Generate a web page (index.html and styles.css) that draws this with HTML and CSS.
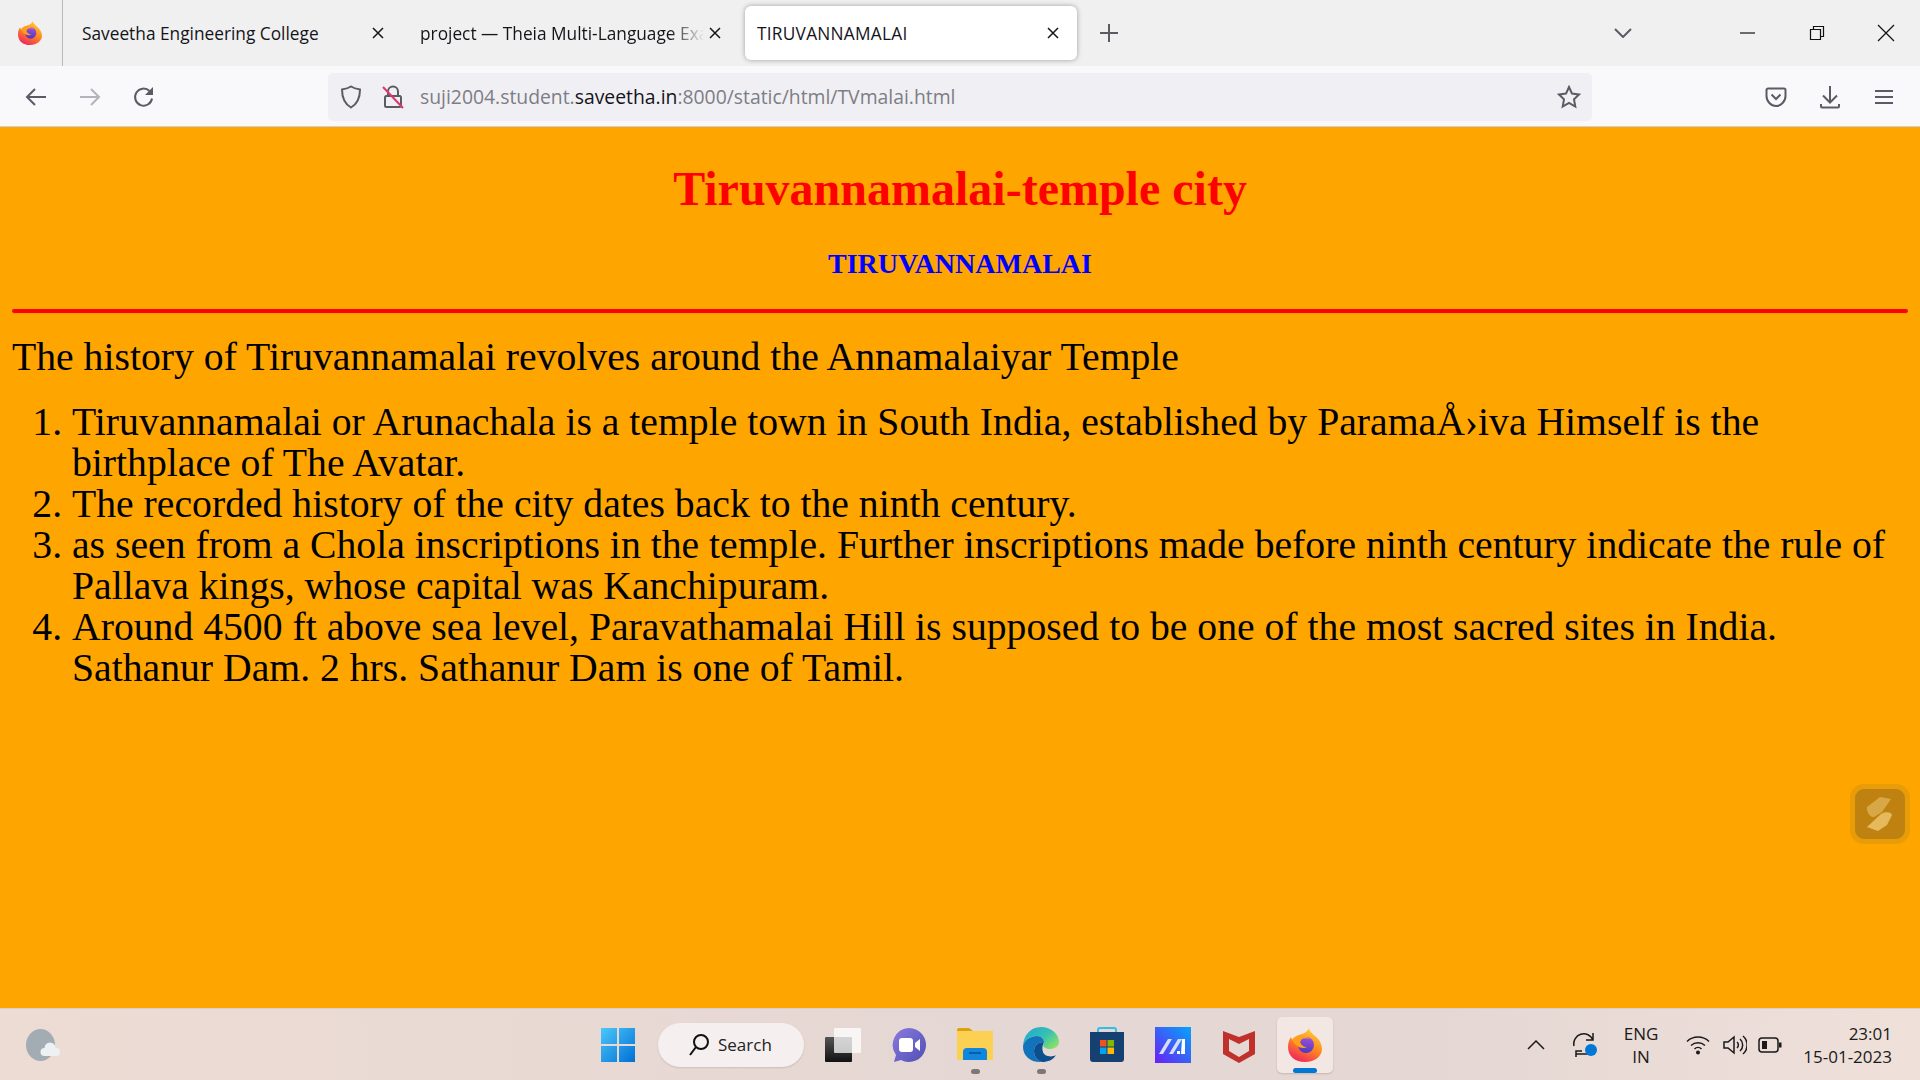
FILE: index.html
```html
<!DOCTYPE html>
<html lang="en">
<head>
    <meta charset="UTF-8">
    <title>TIRUVANNAMALAI</title>
    <link rel="stylesheet" href="styles.css">
</head>
<body>
    <svg class="defs" width="0" height="0" aria-hidden="true">
        <defs>
            <linearGradient id="foxOuter" x1="0.8" y1="0" x2="0.3" y2="1">
                <stop offset="0" stop-color="#ffd53a"/>
                <stop offset="0.5" stop-color="#ff8a1f"/>
                <stop offset="1" stop-color="#f0255e"/>
            </linearGradient>
            <linearGradient id="foxInner" x1="0.6" y1="0" x2="0.4" y2="1">
                <stop offset="0" stop-color="#a24fe0"/>
                <stop offset="1" stop-color="#4a3ab8"/>
            </linearGradient>
            <symbol id="firefox" viewBox="0 0 34 34">
                <path d="M21 0c0 3 3 5 6 8 4 3 7 8 7 13 0 7-7 13-17 13S0 28 0 19c0-4 1-7 3-10l1 3c2-2 4-4 7-5 3-1 8-2 10-7z" fill="url(#foxOuter)"/>
                <circle cx="18" cy="17" r="8" fill="url(#foxInner)"/>
                <path d="M4 12c2-3 4-4 8-5-1 1-1 2 0 2 3-1 8 0 10 2-3-1-6-1-8 0-1 1-1 2-2 3 1 3 4 5 7 5-3 2-8 1-11-2-2-2-3-3-4-5z" fill="#ff9f1c"/>
            </symbol>
        </defs>
    </svg>

    <div class="tabbar">
        <div class="tab-logo">
            <svg width="24" height="24"><use href="#firefox"/></svg>
        </div>
        <div class="tab tab-first">
            <span class="tab-title">Saveetha Engineering College</span>
            <svg class="tab-close" width="12" height="12" viewBox="0 0 12 12"><path d="M1 1l10 10M11 1L1 11"/></svg>
        </div>
        <div class="tab tab-second">
            <span class="tab-title tab-fade">project — Theia Multi-Language Exa</span>
            <svg class="tab-close" width="12" height="12" viewBox="0 0 12 12"><path d="M1 1l10 10M11 1L1 11"/></svg>
        </div>
        <div class="tab tab-active">
            <span class="tab-title">TIRUVANNAMALAI</span>
            <svg class="tab-close" width="12" height="12" viewBox="0 0 12 12"><path d="M1 1l10 10M11 1L1 11"/></svg>
        </div>
        <svg class="tab-new" width="18" height="18" viewBox="0 0 18 18"><path d="M9 0v18M0 9h18"/></svg>
        <div class="tabbar-right">
            <svg class="tab-list" width="18" height="10" viewBox="0 0 18 10"><path d="M1 1l8 8 8-8"/></svg>
            <svg class="win-btn win-min" width="16" height="16" viewBox="0 0 16 16"><path d="M0 8h15"/></svg>
            <svg class="win-btn win-restore" width="16" height="16" viewBox="0 0 16 16"><path d="M1.500 4.500h10v10h-10zM4.500 4.500v-3h10v10h-3"/></svg>
            <svg class="win-btn win-close" width="18" height="18" viewBox="0 0 18 18"><path d="M1 1l16 16M17 1L1 17"/></svg>
        </div>
    </div>

    <div class="navbar">
        <svg class="nav-icon nav-back" width="22" height="20" viewBox="0 0 22 20"><path d="M21 10H2M10 2l-8 8 8 8"/></svg>
        <svg class="nav-icon nav-forward" width="22" height="20" viewBox="0 0 22 20"><path d="M1 10h19M12 2l8 8-8 8"/></svg>
        <svg class="nav-icon nav-reload" width="22" height="22" viewBox="0 0 22 22"><path d="M19 12.500A8.500 8.500 0 1 1 16.500 5"/><path class="solid" d="M20 1v8h-8z"/></svg>
        <div class="urlbar">
            <svg class="url-shield" width="22" height="24" viewBox="0 0 22 24"><path d="M11 1.500c3 2 6 2.500 9 3 0 8-2 14-9 18-7-4-9-10-9-18 3-.5 6-1 9-3z"/></svg>
            <svg class="url-lock" width="22" height="24" viewBox="0 0 22 24"><path d="M6 11V6.500a5 5 0 0 1 10 0V11M4 11h14a1.500 1.500 0 0 1 1 1.500v8a1.500 1.500 0 0 1-1.500 1.500h-13A1.500 1.500 0 0 1 3 20.500v-8A1.500 1.500 0 0 1 4 11z"/><path class="slash" d="M1 2l20 21"/></svg>
            <span class="url-text">suji2004.student.<b>saveetha.in</b>:8000/static/html/TVmalai.html</span>
            <svg class="url-star" width="24" height="24" viewBox="0 0 24 24"><path d="M12 2l3 6.600 7 .9-5 4.900 1.300 7.100L12 18l-6.300 3.500L7 14.400 2 9.500l7-.9z"/></svg>
        </div>
        <svg class="nav-icon nav-pocket" width="22" height="22" viewBox="0 0 22 22"><path d="M3 2.500h16a1.500 1.500 0 0 1 1.500 1.500v6c0 5.500-4.500 10-9.500 10S1.500 15.500 1.500 10V4A1.500 1.500 0 0 1 3 2.500z"/><path d="M6.500 8.500l4.500 4.500 4.500-4.500"/></svg>
        <svg class="nav-icon nav-download" width="22" height="24" viewBox="0 0 22 24"><path d="M11 1v16M4 10.500l7 7 7-7M2 19v2.500a1 1 0 0 0 1 1h16a1 1 0 0 0 1-1V19"/></svg>
        <svg class="nav-icon nav-menu" width="20" height="18" viewBox="0 0 20 18"><path d="M1 3h18M1 9h18M1 15h18"/></svg>
    </div>

    <main class="page">
        <h1>Tiruvannamalai-temple city</h1>
        <h2>TIRUVANNAMALAI</h2>
        <hr>
        <p>The history of Tiruvannamalai revolves around the Annamalaiyar Temple</p>
        <ol>
            <li>Tiruvannamalai or Arunachala is a temple town in South India, established by ParamaÅ›iva Himself is the birthplace of The Avatar.</li>
            <li>The recorded history of the city dates back to the ninth century.</li>
            <li>as seen from a Chola inscriptions in the temple. Further inscriptions made before ninth century indicate the rule of Pallava kings, whose capital was Kanchipuram.</li>
            <li>Around 4500 ft above sea level, Paravathamalai Hill is supposed to be one of the most sacred sites in India. Sathanur Dam. 2 hrs. Sathanur Dam is one of Tamil.</li>
        </ol>
        <div class="float-widget">
            <svg width="30" height="38" viewBox="0 0 30 38">
                <path d="M2 12L15 2l11 2-9 13-8 5c-4 1-8-6-7-10z" fill="#d9a846"/>
                <path d="M2 32l14-13c4-3 11-2 11 1l-5 10-9 6z" fill="#e6ba5c"/>
            </svg>
        </div>
    </main>

    <footer class="taskbar">
        <div class="weather">
            <svg width="42" height="34" viewBox="0 0 42 34">
                <ellipse cx="14.500" cy="17" rx="14.500" ry="16" fill="#a3abb3"/>
                <g fill="#eef1f4">
                    <circle cx="24" cy="20" r="5.500"/>
                    <circle cx="18.500" cy="24" r="4"/>
                    <circle cx="30" cy="24" r="4"/>
                    <rect x="18.500" y="22" width="11.500" height="6"/>
                </g>
            </svg>
        </div>
        <div class="task-center">
            <div class="slot slot-start">
                <svg width="36" height="36" viewBox="0 0 36 36">
                    <defs>
                        <linearGradient id="winBlue" x1="0" y1="0" x2="1" y2="1">
                            <stop offset="0" stop-color="#4cc7fb"/>
                            <stop offset="1" stop-color="#0070d4"/>
                        </linearGradient>
                    </defs>
                    <path d="M1 1h16v16H1zM19 1h16v16H19zM1 19h16v16H1zM19 19h16v16H19z" fill="url(#winBlue)"/>
                </svg>
            </div>
            <div class="search-pill">
                <svg width="22" height="24" viewBox="0 0 22 24"><circle cx="13" cy="9" r="7"/><path d="M8 14l-6 8"/></svg>
                <span>Search</span>
            </div>
            <div class="slot slot-view">
                <svg width="38" height="36" viewBox="0 0 38 36">
                    <defs>
                        <linearGradient id="viewDark" x1="0" y1="0" x2="0" y2="1">
                            <stop offset="0" stop-color="#555"/>
                            <stop offset="1" stop-color="#111"/>
                        </linearGradient>
                    </defs>
                    <rect x="1" y="10" width="27" height="25" rx="1" fill="url(#viewDark)"/>
                    <rect x="10" y="1" width="27" height="25" rx="1" fill="#fff" fill-opacity="0.75"/>
                </svg>
            </div>
            <div class="slot">
                <svg width="36" height="36" viewBox="0 0 36 36">
                    <defs>
                        <linearGradient id="meetBg" x1="0" y1="0" x2="1" y2="1">
                            <stop offset="0" stop-color="#8a7bdc"/>
                            <stop offset="1" stop-color="#4f4fb6"/>
                        </linearGradient>
                    </defs>
                    <path d="M18 1a17 17 0 1 1-8 32l-7 2 2-7A17 17 0 0 1 18 1z" fill="url(#meetBg)"/>
                    <rect x="8" y="11" width="14" height="14" rx="3" fill="#fff"/>
                    <path d="M24 16l5-4v12l-5-4z" fill="#fff"/>
                </svg>
            </div>
            <div class="slot has-dot">
                <svg width="36" height="34" viewBox="0 0 36 34">
                    <path d="M0 2a2 2 0 0 1 2-2h10l4 3h-16z" fill="#dea10e"/>
                    <path d="M0 3h36v29H0z" fill="#fcd052"/>
                    <path d="M6 32V24a4 4 0 0 1 4-4h16a4 4 0 0 1 4 4v8z" fill="#1086de"/>
                    <rect x="12" y="24" width="12" height="2" fill="#0b5ca8"/>
                </svg>
            </div>
            <div class="slot has-dot">
                <svg width="36" height="36" viewBox="0 0 36 36">
                    <defs>
                        <linearGradient id="edgeTop" x1="0" y1="0" x2="1" y2="0.700">
                            <stop offset="0" stop-color="#1fa7d8"/>
                            <stop offset="0.600" stop-color="#35c1b0"/>
                            <stop offset="1" stop-color="#86e06a"/>
                        </linearGradient>
                    </defs>
                    <path d="M18 0c10 0 18 7 18 15 0 4-4 7-9 7-4 0-7-2-7-4 0-1 1-1 1-3 0-3-3-6-7-6-7 0-14 5-14 11C0 9 7 0 18 0z" fill="url(#edgeTop)"/>
                    <path d="M0 20c0-6 7-11 14-11 4 0 7 3 7 6-5 0-10 3-10 9 0 5 3 9 8 11C8 36 0 29 0 20z" fill="#1173bb"/>
                    <path d="M21 15c-5 0-10 3-10 9 0 5 3 9 8 11 6 0 11-2 14-7-5 3-12 1-13-3-1-3-1-6 1-10z" fill="#0c4f8f"/>
                </svg>
            </div>
            <div class="slot">
                <svg width="36" height="36" viewBox="0 0 36 36">
                    <path d="M9 7V3a2 2 0 0 1 2-2h14a2 2 0 0 1 2 2v4" fill="none" stroke="#35bdea" stroke-width="2"/>
                    <path d="M1 5h34v27a3 3 0 0 1-3 3H4a3 3 0 0 1-3-3z" fill="#163f72"/>
                    <rect x="11" y="13" width="6.500" height="6.500" fill="#f25022"/>
                    <rect x="18.500" y="13" width="6.500" height="6.500" fill="#7fba00"/>
                    <rect x="11" y="20.500" width="6.500" height="6.500" fill="#00a4ef"/>
                    <rect x="18.500" y="20.500" width="6.500" height="6.500" fill="#ffb900"/>
                </svg>
            </div>
            <div class="slot">
                <svg width="36" height="36" viewBox="0 0 36 36">
                    <defs>
                        <linearGradient id="appBg" x1="0" y1="1" x2="1" y2="0">
                            <stop offset="0" stop-color="#6a20f5"/>
                            <stop offset="1" stop-color="#05a4fb"/>
                        </linearGradient>
                    </defs>
                    <rect width="36" height="36" fill="url(#appBg)"/>
                    <path d="M4 27l9-15h4l-9 15zM14 27l9-15h4l-9 15z" fill="#d5ddf7"/>
                    <path d="M27 12h3v15h-4zM22 24h3v3h-3z" fill="#fff"/>
                </svg>
            </div>
            <div class="slot">
                <svg width="32" height="36" viewBox="0 0 32 36"><path d="M0 4l16 6 16-6v23l-16 9-16-9zM6 12v12l10 6 10-6V12l-10 5z" fill="#c0312b" fill-rule="evenodd"/></svg>
            </div>
            <div class="slot slot-active">
                <svg width="34" height="34"><use href="#firefox"/></svg>
                <span class="active-bar"></span>
            </div>
        </div>
        <div class="task-tray">
            <svg class="tray-up" width="18" height="10" viewBox="0 0 18 10"><path d="M1 9l8-8 8 8"/></svg>
            <svg class="tray-sync" width="24" height="26" viewBox="0 0 24 26">
                <path d="M1 14A10 10 0 0 1 20 8M20 1v7h-7M20 22H3M3 25v-6h6" fill="none"/>
                <circle class="tray-dot" cx="18" cy="18" r="6"/>
            </svg>
            <div class="tray-lang">ENG<br>IN</div>
            <svg class="tray-wifi" width="24" height="20" viewBox="0 0 24 20"><path d="M1 6.500a16 16 0 0 1 22 0M5 10.500a10.500 10.500 0 0 1 14 0M8.500 14a5 5 0 0 1 7 0"/><circle class="solid" cx="12" cy="17.500" r="2"/></svg>
            <svg class="tray-vol" width="24" height="22" viewBox="0 0 24 22"><path d="M1 8h4l6-5v16l-6-5H1zM14 8a4 4 0 0 1 0 6M17 5a8 8 0 0 1 0 12M20 2a12 12 0 0 1 0 18"/></svg>
            <svg class="tray-batt" width="24" height="16" viewBox="0 0 24 16"><rect x="1" y="1" width="19" height="14" rx="3"/><rect class="solid" x="4" y="4" width="5" height="8"/><rect class="solid" x="21" y="5.500" width="2.500" height="5"/></svg>
            <div class="tray-clock">23:01<br>15-01-2023</div>
        </div>
    </footer>
</body>
</html>
```

FILE: styles.css
```css
* {
    margin: 0;
    padding: 0;
    box-sizing: border-box;
}

html, body {
    width: 100%;
    height: 100%;
    overflow: hidden;
}

body {
    display: flex;
    flex-direction: column;
    font-family: "Open Sans", "Noto Sans", sans-serif;
    background: orange;
}

.defs {
    position: absolute;
}

svg {
    flex: none;
    display: block;
}

/* tab strip */
.tabbar {
    height: 66px;
    display: flex;
    align-items: center;
    background: #f0f0f0;
    flex: none;
}

.tab-logo {
    width: 63px;
    height: 66px;
    display: flex;
    align-items: center;
    padding-left: 18px;
    border-right: 1px solid #b9b9b9;
}

.tab {
    height: 54px;
    display: flex;
    align-items: center;
    font-size: 17.300px;
    color: #15141a;
}

.tab-first {
    width: 334px;
    padding-left: 19px;
}

.tab-second {
    width: 348px;
    padding-left: 23px;
}

.tab-active {
    width: 332px;
    padding-left: 12px;
    letter-spacing: 0.25px;
    background: #fff;
    border-radius: 6px;
    box-shadow: 0 0 5px rgba(0, 0, 0, 0.35);
}

.tab-title {
    flex: 1;
    white-space: nowrap;
    overflow: hidden;
}

.tab-fade {
    -webkit-mask-image: linear-gradient(to right, #000 88%, transparent 100%);
    mask-image: linear-gradient(to right, #000 88%, transparent 100%);
}

.tab-close {
    margin: 0 18px 0 10px;
    fill: none;
    stroke: #15141a;
    stroke-width: 1.500;
}

.tab-first .tab-close {
    margin-right: 13px;
}

.tab-second .tab-close {
    margin: 0 24px 0 5px;
}

.tab-new {
    margin-left: 23px;
    fill: none;
    stroke: #5b5b66;
    stroke-width: 2;
}

.tabbar-right {
    flex: 1;
    display: flex;
    align-items: center;
    justify-content: flex-end;
    padding-right: 25px;
}

.tab-list {
    margin-right: 108px;
    fill: none;
    stroke: #5b5b66;
    stroke-width: 2;
}

.win-btn {
    fill: none;
    stroke: #111;
    stroke-width: 1.200;
}

.win-min {
    margin-right: 53px;
}

.win-restore {
    margin-right: 52px;
}

/* toolbar */
.navbar {
    height: 61px;
    flex: none;
    display: flex;
    align-items: center;
    padding-top: 1px;
    background: #f9f9fb;
    border-bottom: 1px solid #cfcfd8;
}

.nav-icon,
.urlbar svg {
    fill: none;
    stroke: #5b5b66;
    stroke-width: 2;
}

.nav-icon .solid {
    fill: #5b5b66;
    stroke: none;
}

.nav-back {
    margin-left: 25px;
}

.nav-forward {
    margin-left: 32px;
    stroke: #b4b4ba;
}

.nav-reload {
    margin-left: 32px;
}

.urlbar {
    width: 1264px;
    height: 48px;
    margin-left: 173px;
    display: flex;
    align-items: center;
    background: #f0f0f4;
    border-radius: 5px;
}

.url-shield {
    margin-left: 12px;
}

.url-lock {
    margin-left: 20px;
}

.url-lock .slash {
    stroke: #e0356a;
}

.url-text {
    flex: 1;
    margin-left: 16px;
    font-size: 19.350px;
    color: #7d7d85;
    white-space: nowrap;
}

.url-text b {
    font-weight: 400;
    color: #15141a;
}

.url-star {
    margin-right: 11px;
}

.nav-pocket {
    margin-left: 173px;
}

.nav-download {
    margin-left: 32px;
}

.nav-menu {
    margin-left: 33px;
}

/* page content */
.page {
    flex: 1;
    position: relative;
    padding: 0 12px;
    background: orange;
    font-family: "Liberation Serif", serif;
    font-size: 39.700px;
    line-height: 41px;
    color: #000;
}

h1 {
    margin-top: 34px;
    height: 56px;
    text-align: center;
    color: red;
    font-size: 48px;
    line-height: 56px;
    font-weight: bold;
}

h2 {
    margin-top: 31px;
    text-align: center;
    color: blue;
    font-size: 28px;
    line-height: 32px;
    font-weight: bold;
}

hr {
    height: 4px;
    margin-top: 29px;
    background: red;
    border: none;
    border-radius: 2px;
}

.page p {
    margin-top: 24px;
}

ol {
    margin-top: 24px;
    padding-left: 60px;
}

.float-widget {
    position: absolute;
    top: 657px;
    right: 10px;
    width: 60px;
    height: 60px;
    display: flex;
    align-items: center;
    justify-content: center;
    background: #bf8210;
    border: 5px solid #e89c08;
    border-radius: 14px;
}

/* windows taskbar */
.taskbar {
    height: 72px;
    flex: none;
    display: flex;
    align-items: center;
    background: linear-gradient(to right, #eddcd4, #e5d7d3 50%, #e5d7d3 75%, #efe0da);
    border-top: 1px solid #dccfca;
}

.weather {
    margin-left: 26px;
    width: 574px;
}

.task-center {
    display: flex;
    align-items: center;
}

.slot {
    width: 66px;
    height: 56px;
    position: relative;
    display: flex;
    align-items: center;
    justify-content: center;
}

.slot-start {
    width: 36px;
}

.search-pill {
    width: 146px;
    height: 44px;
    margin-left: 22px;
    display: flex;
    align-items: center;
    gap: 8px;
    padding-left: 30px;
    border-radius: 22px;
    background: #f5f0ef;
    box-shadow: 0 1px 2px rgba(0, 0, 0, 0.12);
    font-size: 17px;
    color: #222;
}

.search-pill svg {
    fill: none;
    stroke: #111;
    stroke-width: 2;
}

.slot-view {
    margin-left: 6px;
}

.has-dot::after {
    content: "";
    position: absolute;
    bottom: -1px;
    left: 29px;
    width: 9px;
    height: 5px;
    border-radius: 3px;
    background: #7d7876;
}

.slot-active {
    width: 56px;
    margin-left: 5px;
    background: #f2e7e3;
    border-radius: 5px;
    box-shadow: 0 1px 2px rgba(0, 0, 0, 0.15);
}

.active-bar {
    position: absolute;
    bottom: 0;
    left: 16px;
    width: 24px;
    height: 5px;
    border-radius: 3px;
    background: #0078d4;
}

.task-tray {
    display: flex;
    align-items: center;
    margin-left: 194px;
    color: #1a1a1a;
    font-size: 17px;
    line-height: 23px;
}

.task-tray svg {
    fill: none;
    stroke: #1a1a1a;
    stroke-width: 1.500;
}

.task-tray .solid {
    fill: #1a1a1a;
    stroke: none;
}

.task-tray .tray-dot {
    fill: #0078d4;
    stroke: none;
}

.tray-sync {
    margin-left: 28px;
}

.tray-lang {
    width: 50px;
    margin-left: 19px;
    text-align: center;
}

.tray-wifi {
    margin-left: 20px;
}

.tray-vol {
    margin-left: 13px;
}

.tray-batt {
    margin-left: 11px;
}

.tray-clock {
    width: 100px;
    margin-left: 10px;
    text-align: right;
}
```
